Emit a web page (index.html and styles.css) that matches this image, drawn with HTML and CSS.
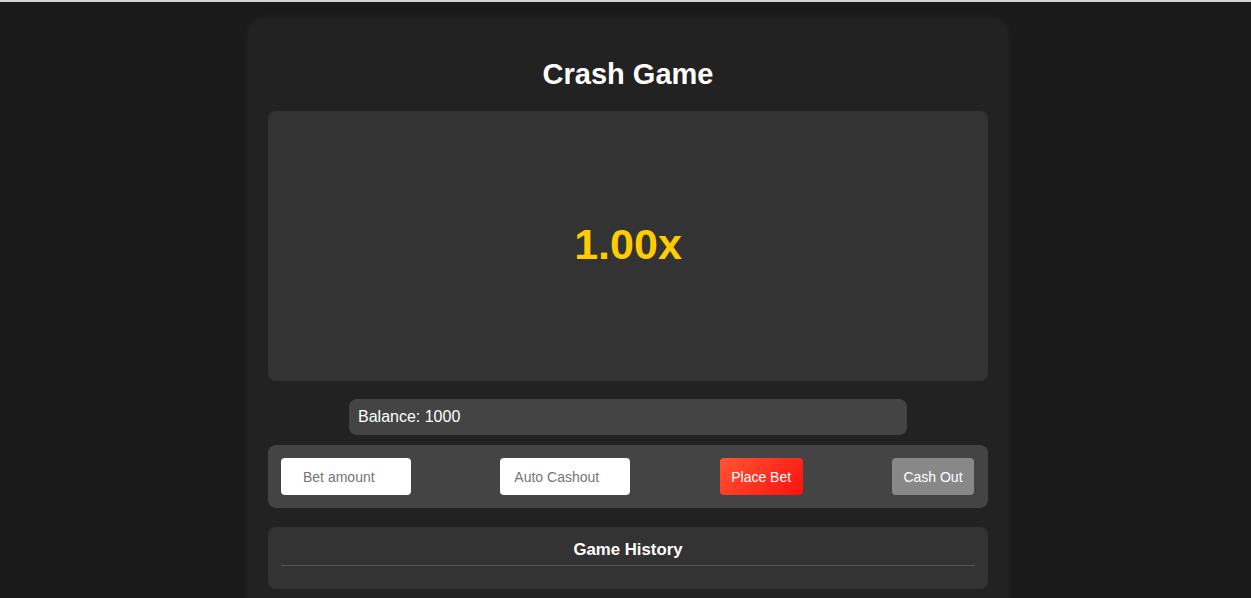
FILE: index.html
```html
<!DOCTYPE html>
<html lang="en">
<head>
<meta charset="utf-8">
<title>Crash Game</title>
<link rel="stylesheet" href="styles.css">
</head>
<body>
<div class="game-container">
  <h1 class="title">Crash Game</h1>
  <div class="game-area">
    <div class="multiplier">1.00x</div>
  </div>
  <div class="balance">Balance: 1000</div>
  <div class="controls">
    <input class="input input-bet" type="text" placeholder="Bet amount">
    <input class="input input-auto" type="text" placeholder="Auto Cashout">
    <button class="btn btn-place">Place Bet</button>
    <button class="btn btn-cash">Cash Out</button>
  </div>
  <div class="history">
    <h3 class="history-title">Game History</h3>
    <div class="history-list"></div>
  </div>
</div>
</body>
</html>
```
FILE: styles.css
```css
html, body {
  margin: 0;
  height: 100%;
}
body {
  background: #1a1a1a;
  border-top: 2px solid #d2d2d2;
  box-sizing: border-box;
  padding: 17px 0 0 5px;
  font-family: "Liberation Sans", Arial, sans-serif;
  color: #fff;
  overflow: hidden;
}
.game-container {
  width: 720px;
  margin: 0 auto;
  padding: 20px;
  background: #222;
  border-radius: 15px;
  box-shadow: 0 0 12px rgba(255, 255, 255, 0.05);
  min-height: 700px;
}
.title {
  margin: 19px 0 21px;
  font-size: 29px;
  line-height: 32px;
  font-weight: bold;
  text-align: center;
}
.game-area {
  height: 270px;
  background: #333;
  border-radius: 8px;
  display: flex;
  align-items: center;
  justify-content: center;
}
.multiplier {
  font-size: 43px;
  font-weight: bold;
  color: #ffcc00;
  margin-top: -3px;
}
.balance {
  width: 558px;
  box-sizing: border-box;
  margin: 18px auto 0;
  padding: 9px 9px;
  background: #444;
  border-radius: 8px;
  font-size: 16px;
  line-height: 18px;
}
.controls {
  margin-top: 10px;
  padding: 13px 14px 13px 13px;
  background: #444;
  border-radius: 8px;
  display: flex;
  justify-content: space-between;
  align-items: center;
}
.input {
  width: 130px;
  height: 37px;
  box-sizing: border-box;
  border: none;
  border-radius: 4px;
  background: #fff;
  font-family: "Liberation Sans", Arial, sans-serif;
  font-size: 14px;
  color: #333;
  outline: none;
}
.input::placeholder {
  color: #757575;
}
.input-bet {
  padding: 0 0 0 22px;
}
.input-auto {
  padding: 0 0 0 14px;
}
.btn {
  height: 37px;
  border: none;
  border-radius: 4px;
  color: #fff;
  font-family: "Liberation Sans", Arial, sans-serif;
  font-size: 14px;
  padding: 0;
}
.btn-place {
  width: 83px;
  background: linear-gradient(135deg, #ff5533, #ff1010);
}
.btn-cash {
  width: 82px;
  background: #888;
}
.history {
  margin-top: 19px;
  padding: 13px;
  background: #333;
  border-radius: 8px;
}
.history-title {
  margin: 0 0 10px;
  padding: 1px 0 6px;
  border-bottom: 1px solid #555;
  font-size: 16.8px;
  line-height: 18px;
  text-align: center;
}
.history-list {
  min-height: 0;
}
```
